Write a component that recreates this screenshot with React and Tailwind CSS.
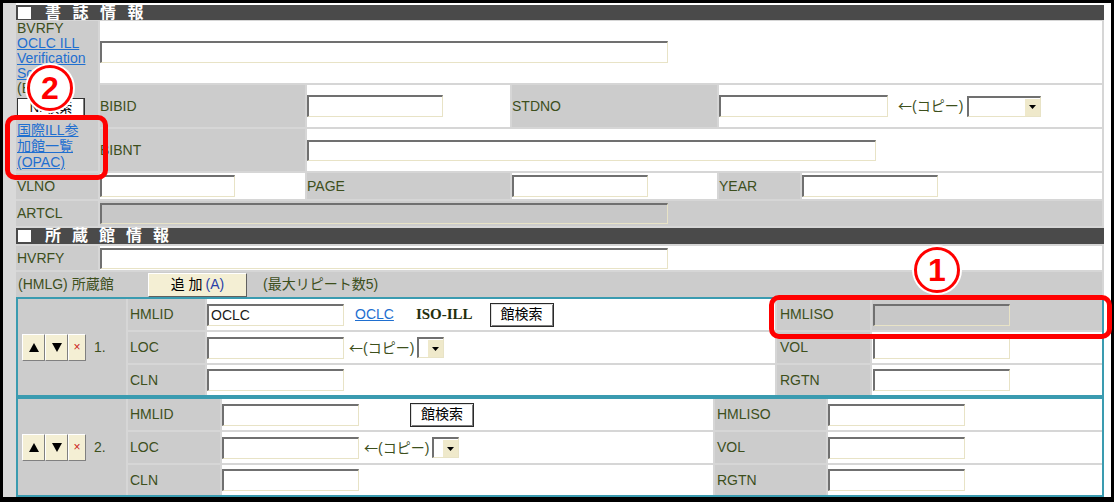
import React from 'react'

const label = 'text-[#3d4f1c]'
const grey = 'bg-[#cccccc]'

function Input({ w = 'w-[136px]', h = 'h-[22px]', gray = false, children }) {
  return (
    <div
      className={`${w} ${h} shrink-0 flex items-center px-[2px] border-t-2 border-l-2 border-r border-b border-t-[#707070] border-l-[#707070] border-r-[#e8e3c6] border-b-[#e8e3c6] text-[14px] text-[#1a1a1a] ${gray ? 'bg-[#c8c8c8]' : 'bg-white'}`}
    >
      {children}
    </div>
  )
}

function Select({ w }) {
  return (
    <div className={`${w} h-[21px] shrink-0 flex justify-end border-t-2 border-l-2 border-r border-b border-t-[#707070] border-l-[#707070] border-r-[#e8e3c6] border-b-[#e8e3c6] bg-white`}>
      <div className="w-[16px] h-full bg-[#efe9cb] border-l border-t border-white flex items-center justify-center">
        <svg width="7" height="4" viewBox="0 0 7 4">
          <path d="M0 0h7L3.5 4z" fill="#000" />
        </svg>
      </div>
    </div>
  )
}

function Copy({ className = '' }) {
  return (
    <span className={`${label} text-[14px] whitespace-nowrap ${className}`}>
      <span className="font-['Noto_Sans_CJK_JP',sans-serif]">←</span>(コピー)
    </span>
  )
}

function SearchBtn({ className = '' }) {
  return (
    <div className={`w-[64px] h-[24px] shrink-0 flex items-center justify-center bg-white border border-[#2a2a2a] shadow-[inset_1px_1px_0_#e0e0e0,inset_-1px_-1px_0_#808080] text-[14px] text-black ${className}`}>
      館検索
    </div>
  )
}

function Bar({ chars, gap }) {
  return (
    <div className="h-[15px] bg-[#4a4a4a] flex items-center pl-[2px] text-white font-bold text-[16px] leading-none">
      <span className="w-[13px] h-[12px] bg-white mr-[14px]" />
      <div className={`flex ${gap}`}>
        {chars.map((c, i) => (
          <span key={i}>{c}</span>
        ))}
      </div>
    </div>
  )
}

function Mover({ n }) {
  const btn = 'h-[27px] bg-[#f4efd4] border border-t-white border-l-white border-r-[#808080] border-b-[#808080] flex items-center justify-center'
  return (
    <div className={`row-span-3 ${grey} flex items-center pl-[4px]`}>
      <div className={`${btn} w-[23px]`}>
        <svg width="10" height="9" viewBox="0 0 10 9">
          <path d="M5 0L10 9H0z" fill="#000" />
        </svg>
      </div>
      <div className={`${btn} w-[23px]`}>
        <svg width="10" height="9" viewBox="0 0 10 9">
          <path d="M0 0h10L5 9z" fill="#000" />
        </svg>
      </div>
      <div className={`${btn} w-[18px] text-[#cc2222] text-[12px]`}>×</div>
      <span className={`${label} text-[14px] ml-[8px]`}>{n}.</span>
    </div>
  )
}

function Lbl({ children, pad = 'pl-[1px]', bg = grey, className = '' }) {
  return <div className={`${bg} ${pad} flex items-center text-[14px] ${label} ${className}`}>{children}</div>
}

function Circle({ n, className }) {
  return (
    <div className={`absolute ${className} w-[46px] h-[46px] rounded-full bg-white border-[3px] border-[#ff0000] ring-2 ring-white flex items-center justify-center text-[#ff0000] font-bold text-[32px] leading-none`}>
      {n}
    </div>
  )
}

export default function App() {
  return (
    <div className="relative w-[1114px] h-[502px] font-['Liberation_Sans','Noto_Sans_CJK_JP',sans-serif]">
      <div className="w-full h-full border-t-[3px] border-l-[3px] border-r-[3px] border-b-[5px] border-black bg-white flex">
        <div className="w-[13px] h-full bg-[#d9d9d9]" />
        <div className="w-[1088px] h-full flex flex-col bg-[#d6d6d6]">
          <div className="h-[2px] bg-white" />
          <Bar chars={['書', '誌', '情', '報']} gap="gap-[11.5px]" />
          <div className="h-[1px]" />

          {/* 書誌情報 */}
          <div className="w-[1086px] grid grid-cols-[82px_205px_203px_205px_81px_300px] grid-rows-[62px_42px_42px_26px_25px] gap-[2px]">
            <div className={`row-span-3 ${grey} px-[1px] text-[14px] leading-[15px]`}>
              <div className={label}>BVRFY</div>
              <div className="text-[#1f6fd0] underline">
                OCLC ILL<br />Verification<br />Screen
              </div>
              <div className={label}>(BIB)</div>
              <div className="mt-[2px] w-[68px] h-[19px] bg-white border border-[#333] shadow-[inset_-1px_-1px_0_#808080] flex items-center justify-center text-[13px] text-black">
                NII検索
              </div>
              <div className="mt-[5px] text-[#1f6fd0] underline leading-[16px]">
                国際ILL参<br />加館一覧<br />(OPAC)
              </div>
            </div>
            <div className="col-span-5 bg-white flex items-center">
              <Input w="w-[568px]" />
            </div>

            <Lbl pad="pl-0">BIBID</Lbl>
            <div className="bg-white flex items-center">
              <Input w="w-[136px]" />
            </div>
            <Lbl pad="pl-0">STDNO</Lbl>
            <div className="col-span-2 bg-white flex items-center">
              <Input w="w-[169px]" />
              <Copy className="ml-[10px]" />
              <div className="ml-[4px]">
                <Select w="w-[74px]" />
              </div>
            </div>

            <Lbl pad="pl-0">BIBNT</Lbl>
            <div className="col-span-4 bg-white flex items-center">
              <Input w="w-[569px]" h="h-[21px]" />
            </div>

            <Lbl>VLNO</Lbl>
            <div className="bg-white flex items-center">
              <Input w="w-[135px]" />
            </div>
            <Lbl pad="pl-0">PAGE</Lbl>
            <div className="bg-white flex items-center">
              <Input w="w-[136px]" />
            </div>
            <Lbl pad="pl-0">YEAR</Lbl>
            <div className="bg-white flex items-center">
              <Input w="w-[136px]" />
            </div>

            <Lbl>ARTCL</Lbl>
            <div className={`col-span-5 ${grey} flex items-center`}>
              <Input w="w-[568px]" h="h-[21px]" gray />
            </div>
          </div>

          <div className="h-[2px]" />
          <div className="h-[16px] flex flex-col justify-center bg-[#4a4a4a]">
            <Bar chars={['所', '蔵', '館', '情', '報']} gap="gap-[11px]" />
          </div>
          <div className="h-[2px]" />

          {/* 所蔵館情報 */}
          <div className="w-[1086px] h-[24px] grid grid-cols-[82px_1002px] gap-[2px]">
            <Lbl>HVRFY</Lbl>
            <div className="bg-white flex items-center">
              <Input w="w-[568px]" h="h-[21px]" />
            </div>
          </div>
          <div className="h-[2px]" />
          <div className={`w-[1086px] h-[25px] ${grey} flex items-center pl-[2px] text-[14px] ${label}`}>
            <span className="w-[130px] whitespace-nowrap">(HMLG) 所蔵館</span>
            <div className="w-[99px] h-[24px] bg-[#f4efd4] border border-t-white border-l-white border-r-[#606060] border-b-[#606060] flex items-center justify-center text-black">
              追 加 <span className="ml-[3px] text-[#2a3fa8]">(A)</span>
            </div>
            <span className="ml-[16px]">(最大リピート数5)</span>
          </div>

          {/* repeat 1 */}
          <div className="h-[100px] border-2 border-[#3a9bb0] bg-[#d6d6d6] grid grid-cols-[108px_77px_568px_93px_230px] grid-rows-[31px_31px_30px] gap-[2px]">
            <Mover n={1} />
            <Lbl pad="pl-[2px]">HMLID</Lbl>
            <div className="bg-white flex items-center">
              <Input w="w-[137px]">OCLC</Input>
              <span className="ml-[11px] text-[14px] text-[#1f6fd0] underline">OCLC</span>
              <span className="ml-[22px] text-[15px] font-bold text-[#24300e] font-['Liberation_Serif',serif]">ISO-ILL</span>
              <SearchBtn className="ml-[17px]" />
            </div>
            <Lbl pad="pl-[3px]">HMLISO</Lbl>
            <div className={`${grey} flex items-center pl-[1px]`}>
              <Input w="w-[137px]" gray />
            </div>

            <Lbl pad="pl-[2px]">LOC</Lbl>
            <div className="bg-white flex items-center">
              <Input w="w-[137px]" />
              <Copy className="ml-[5px]" />
              <div className="ml-[3px]">
                <Select w="w-[27px]" />
              </div>
            </div>
            <Lbl pad="pl-[3px]">VOL</Lbl>
            <div className="bg-white flex items-center pl-[1px]">
              <Input w="w-[137px]" />
            </div>

            <Lbl pad="pl-[2px]">CLN</Lbl>
            <div className="bg-white flex items-center">
              <Input w="w-[137px]" />
            </div>
            <Lbl pad="pl-[3px]">RGTN</Lbl>
            <div className="bg-white flex items-center pl-[1px]">
              <Input w="w-[137px]" />
            </div>
          </div>

          {/* repeat 2 */}
          <div className="h-[100px] border-2 border-[#3a9bb0] bg-[#d6d6d6] grid grid-cols-[108px_92px_491px_111px_274px] grid-rows-[31px_31px_30px] gap-[2px]">
            <Mover n={2} />
            <Lbl pad="pl-[2px]">HMLID</Lbl>
            <div className="bg-white flex items-center">
              <Input w="w-[137px]" />
              <SearchBtn className="ml-[51px]" />
            </div>
            <Lbl pad="pl-[2px]">HMLISO</Lbl>
            <div className="bg-white flex items-center">
              <Input w="w-[137px]" />
            </div>

            <Lbl pad="pl-[2px]">LOC</Lbl>
            <div className="bg-white flex items-center">
              <Input w="w-[137px]" />
              <Copy className="ml-[5px]" />
              <div className="ml-[3px]">
                <Select w="w-[27px]" />
              </div>
            </div>
            <Lbl pad="pl-[2px]">VOL</Lbl>
            <div className="bg-white flex items-center">
              <Input w="w-[137px]" />
            </div>

            <Lbl pad="pl-[2px]">CLN</Lbl>
            <div className="bg-white flex items-center">
              <Input w="w-[137px]" />
            </div>
            <Lbl pad="pl-[2px]">RGTN</Lbl>
            <div className="bg-white flex items-center">
              <Input w="w-[137px]" />
            </div>
          </div>
        </div>
        <div className="flex-1 h-full bg-white" />
      </div>

      {/* annotations */}
      <Circle n="2" className="left-[27px] top-[65px]" />
      <div className="absolute left-[5px] top-[115px] w-[103px] h-[65px] rounded-[10px] border-[5px] border-[#ff0000]" />
      <Circle n="1" className="left-[914px] top-[247px]" />
      <div className="absolute left-[769px] top-[295px] w-[343px] h-[44px] rounded-[10px] border-[5px] border-[#ff0000]" />
    </div>
  )
}
